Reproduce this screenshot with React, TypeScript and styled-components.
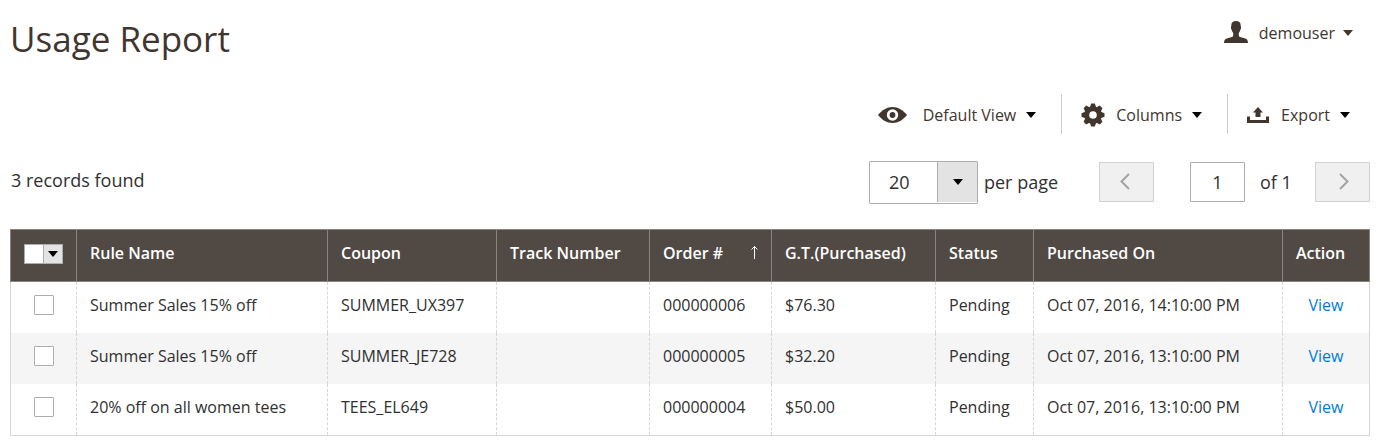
import React from "react";
import styled, { createGlobalStyle } from "styled-components";

const Global = createGlobalStyle`
  *, *::before, *::after { box-sizing: border-box; }
  body {
    margin: 0;
    background: #fff;
    color: #303030;
    font-family: "Open Sans", "Liberation Sans", sans-serif;
    font-size: 16px;
    line-height: 22px;
  }
  button, input, select { font: inherit; color: inherit; margin: 0; }
`;

const Page = styled.main`
  padding: 12px 9px 10px 10px;
`;

const Header = styled.header`
  display: flex;
  justify-content: space-between;
  align-items: flex-start;
  height: 82px;
`;

const Title = styled.h1`
  margin: 0;
  font-size: 35px;
  line-height: 54px;
  font-weight: 400;
  color: #41362f;
`;

const PlainButton = styled.button<{ $gap: number }>`
  display: flex;
  align-items: center;
  padding: 2px 0 0;
  border: 0;
  background: none;
  color: #41362f;
  cursor: pointer;
  svg:first-child { margin-right: ${(p) => p.$gap}px; }
  svg:last-child { margin-left: 10px; }
`;

const UserMenu = styled(PlainButton)`
  margin: 8px 17px 0 0;
  height: 24px;
  svg:first-child { margin-bottom: 3px; }
  svg:last-child { margin-left: 8px; }
`;

const Toolbar = styled.div`
  display: flex;
  justify-content: flex-end;
  padding-right: 1px;
`;

const ToolItem = styled.div`
  display: flex;
  height: 40px;
  padding: 0 25px 0 19px;
  & + & { border-left: 1px solid #ccc; }
  &:last-child { padding-right: 19px; }
`;

const Controls = styled.div`
  display: flex;
  justify-content: space-between;
  align-items: flex-start;
  margin: 27px 0 25px;
  font-size: 18px;
  line-height: 42px;
`;

const Records = styled.p`
  margin: 0;
  padding-left: 1px;
  line-height: 38px;
`;

const Pager = styled.div`
  display: flex;
  align-items: flex-start;
`;

const SelectBox = styled.span`
  display: grid;
  grid-template-columns: 1fr 40px;
  width: 109px;
  height: 43px;
  margin-right: 6px;
  padding-bottom: 1px;
  border: 1px solid #adadad;
  border-radius: 1px;
`;

const PageSize = styled.select`
  grid-area: 1 / 1 / 2 / 3;
  appearance: none;
  padding: 0 0 0 19px;
  border: 0;
  background: transparent;
  line-height: 40px;
`;

const SelectArrow = styled.span`
  grid-area: 1 / 2;
  display: flex;
  align-items: center;
  justify-content: center;
  border-left: 1px solid #adadad;
  background: #e3e3e3;
  pointer-events: none;
`;

const PageButton = styled.button<{ $next?: boolean }>`
  display: flex;
  align-items: center;
  justify-content: center;
  width: 55px;
  height: 40px;
  margin-top: 1px;
  padding: ${(p) => (p.$next ? "0 0 2px 3px" : "0 3px 2px 0")};
  border: 1px solid #d1d1d1;
  background: #f0f0f0;
`;

const PageInput = styled.input`
  width: 55px;
  height: 40px;
  margin: 1px 15px 0 36px;
  padding: 0;
  border: 1px solid #adadad;
  border-radius: 1px;
  text-align: center;
`;

const PerPage = styled.label`
  width: 115px;
`;

const Total = styled.span`
  width: 55px;
`;

const Table = styled.table`
  width: 100%;
  table-layout: fixed;
  border-collapse: separate;
  border-spacing: 0;
  border-bottom: 1px solid #d6d6d6;
`;

const Col = styled.col<{ $width: number }>`
  width: ${(p) => p.$width}px;
`;

const HeadCell = styled.th`
  height: 53px;
  padding: 0 13px 5px;
  border: 1px solid #8a837f;
  border-right: 0;
  background: #514943;
  color: #fff;
  font-weight: 600;
  text-align: left;
  vertical-align: middle;
  white-space: nowrap;
  &:first-child { padding-bottom: 4px; }
  &:last-child { border-right: 1px solid #8a837f; }
`;

const SortButton = styled.button`
  display: flex;
  align-items: center;
  justify-content: space-between;
  width: 100%;
  padding: 0;
  border: 0;
  background: none;
`;

const Row = styled.tr`
  &:nth-child(even) { background: #f5f5f5; }
`;

const Cell = styled.td<{ $center?: boolean }>`
  height: 51px;
  padding: 0 13px 6px;
  border-left: 1px dashed #d6d6d6;
  text-align: ${(p) => (p.$center ? "center" : "left")};
  vertical-align: middle;
  white-space: nowrap;
  &:first-child { border-left: 1px solid #d6d6d6; }
  &:last-child { border-right: 1px solid #d6d6d6; }
`;

const Tick = styled.input`
  display: block;
  appearance: none;
  width: 20px;
  height: 20px;
  margin: 0 auto;
  border: 1px solid #adadad;
  border-radius: 1px;
  background: #fff;
  &:checked { background: #514943; }
`;

const MultiSelect = styled.div`
  display: flex;
  width: 39px;
  height: 20px;
  border: 1px solid #adadad;
  background: #fff;
`;

const HeadTick = styled(Tick)`
  width: 18px;
  height: 18px;
  margin: 0;
  border: 0;
`;

const MultiButton = styled.button`
  display: flex;
  align-items: center;
  justify-content: center;
  width: 19px;
  padding: 0;
  border: 0;
  border-left: 1px solid #adadad;
  background: #e3e3e3;
`;

const ViewLink = styled.a`
  color: #007bdb;
  text-decoration: none;
`;

const Caret = ({ color = "#000" }: { color?: string }) => (
  <svg width="10" height="6" viewBox="0 0 10 6" aria-hidden="true">
    <path d="M0 0h10L5 6z" fill={color} />
  </svg>
);

const UserIcon = () => (
  <svg width="24" height="22" viewBox="0 0 24 22" fill="#41362f" aria-hidden="true">
    <path d="M12 0c3.400 0 4.700 1.600 4.700 4.500 0 .8.400 1.300.4 2.300 0 .9-.4 1.500-.9 2.200-.2 1.300-.7 2.300-1.400 3.100v2.300c0 .7.500 1.200 1.400 1.500l5 1.500c1.900.6 2.700 1.700 2.800 4.600H0c.1-2.900.9-4 2.800-4.600l5-1.500c.9-.3 1.400-.8 1.400-1.500v-2.300C8.500 11.300 8 10.300 7.800 9c-.5-.7-.9-1.300-.9-2.200 0-1 .4-1.500.4-2.300C7.300 1.600 8.600 0 12 0z" />
  </svg>
);

const EyeIcon = () => (
  <svg width="29" height="16" viewBox="0 0 29 16" aria-hidden="true">
    <path d="M0 8C4 3 9 0 14.500 0S25 3 29 8c-4 5-9 8-14.500 8S4 13 0 8z" fill="#41362f" />
    <circle cx="14.500" cy="8" r="4.300" fill="#41362f" stroke="#fff" strokeWidth="2.800" />
  </svg>
);

const GearIcon = () => (
  <svg width="24" height="24" viewBox="-12 -12 24 24" aria-hidden="true">
    <g fill="#41362f">
      {[0, 45, 90, 135, 180, 225, 270, 315].map((a) => (
        <path key={a} d="M-3.400-7L-1.800-11.500H1.800L3.400-7z" transform={`rotate(${a})`} />
      ))}
    </g>
    <circle r="6.300" fill="none" stroke="#41362f" strokeWidth="5" />
  </svg>
);

const ExportIcon = () => (
  <svg width="22" height="16" viewBox="0 0 22 16" fill="#41362f" aria-hidden="true">
    <path d="M11 0l5 5.500h-2.500V10h-5V5.500H6z" />
    <path d="M0 9.500h3V13h16V9.500h3V16H0z" />
  </svg>
);

const Chevron = ({ right }: { right?: boolean }) => (
  <svg width="10" height="17" viewBox="0 0 10 17" fill="none" stroke="#a3a3a3" strokeWidth="2" aria-hidden="true">
    <path d={right ? "M1 1l7.500 7.500L1 16" : "M9 1L1.500 8.500 9 16"} />
  </svg>
);

const SortArrow = () => (
  <svg width="7" height="15" viewBox="0 0 7 15" fill="none" stroke="#fff" aria-hidden="true">
    <path d="M3.500 13V.5M.5 3.500l3-3 3 3" />
  </svg>
);

const columns = [
  { name: "Rule Name", width: 251 },
  { name: "Coupon", width: 169 },
  { name: "Track Number", width: 153 },
  { name: "Order #", width: 122, sorted: true },
  { name: "G.T.(Purchased)", width: 164 },
  { name: "Status", width: 98 },
  { name: "Purchased On", width: 249 },
  { name: "Action", width: 88 },
];

const rows = [
  ["Summer Sales 15% off", "SUMMER_UX397", "", "000000006", "$76.30", "Pending", "Oct 07, 2016, 14:10:00 PM"],
  ["Summer Sales 15% off", "SUMMER_JE728", "", "000000005", "$32.20", "Pending", "Oct 07, 2016, 13:10:00 PM"],
  ["20% off on all women tees", "TEES_EL649", "", "000000004", "$50.00", "Pending", "Oct 07, 2016, 13:10:00 PM"],
];

export default function App() {
  return (
    <Page>
      <Global />
      <Header>
        <Title>Usage Report</Title>
        <UserMenu type="button" $gap={11}>
          <UserIcon />
          demouser
          <Caret color="#41362f" />
        </UserMenu>
      </Header>
      <Toolbar>
        <ToolItem>
          <PlainButton type="button" $gap={16}><EyeIcon />Default View<Caret /></PlainButton>
        </ToolItem>
        <ToolItem>
          <PlainButton type="button" $gap={11}><GearIcon />Columns<Caret /></PlainButton>
        </ToolItem>
        <ToolItem>
          <PlainButton type="button" $gap={12}><ExportIcon />Export<Caret /></PlainButton>
        </ToolItem>
      </Toolbar>
      <Controls>
        <Records>3 records found</Records>
        <Pager>
          <SelectBox>
            <SelectArrow><Caret /></SelectArrow>
            <PageSize id="page-size" defaultValue="20">
              <option>20</option>
              <option>30</option>
              <option>50</option>
            </PageSize>
          </SelectBox>
          <PerPage htmlFor="page-size">per page</PerPage>
          <PageButton type="button" aria-label="Previous page" disabled><Chevron /></PageButton>
          <PageInput type="text" aria-label="Page number" defaultValue="1" />
          <Total>of 1</Total>
          <PageButton type="button" aria-label="Next page" $next disabled><Chevron right /></PageButton>
        </Pager>
      </Controls>
      <Table>
        <colgroup>
          <Col $width={66} />
          {columns.map((c) => <Col key={c.name} $width={c.width} />)}
        </colgroup>
        <thead>
          <tr>
            <HeadCell>
              <MultiSelect>
                <HeadTick type="checkbox" aria-label="Select all" />
                <MultiButton type="button" aria-label="Selection options"><Caret /></MultiButton>
              </MultiSelect>
            </HeadCell>
            {columns.map((c) => (
              <HeadCell key={c.name} scope="col">
                {c.sorted ? <SortButton type="button">{c.name}<SortArrow /></SortButton> : c.name}
              </HeadCell>
            ))}
          </tr>
        </thead>
        <tbody>
          {rows.map((r) => (
            <Row key={r[3]}>
              <Cell><Tick type="checkbox" aria-label={`Select order ${r[3]}`} /></Cell>
              {r.map((text, i) => <Cell key={columns[i].name}>{text}</Cell>)}
              <Cell $center><ViewLink href="#view">View</ViewLink></Cell>
            </Row>
          ))}
        </tbody>
      </Table>
    </Page>
  );
}
